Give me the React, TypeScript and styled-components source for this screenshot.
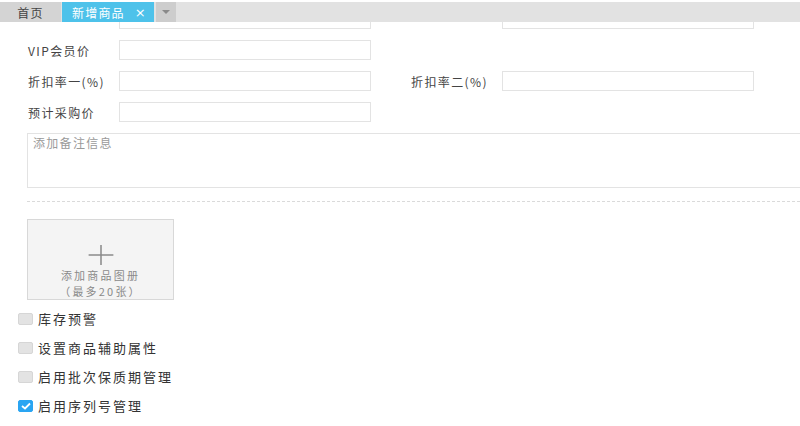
import styled, { createGlobalStyle } from "styled-components";

const GlobalStyle = createGlobalStyle`
  html, body {
    margin: 0;
    padding: 0;
    background: #ffffff;
    font-family: "Noto Sans CJK SC", "Noto Sans", "Liberation Sans", sans-serif;
    color: #333;
  }
`;

const Page = styled.div`
  width: 800px;
  height: 426px;
  overflow: hidden;
  background: #fff;
`;

const TabBar = styled.div`
  margin-top: 2px;
  height: 20px;
  background: #e2e2e2;
  display: flex;
  align-items: stretch;
`;

const Tab = styled.div<{ $active?: boolean; $w: number }>`
  width: ${(p) => p.$w}px;
  margin-right: ${(p) => (p.$active ? 2 : 1)}px;
  background: ${(p) => (p.$active ? "#4ec2ea" : "#d4d4d4")};
  color: ${(p) => (p.$active ? "#fff" : "#444")};
  font-size: 12px;
  letter-spacing: 1.2px;
  display: flex;
  align-items: center;
  justify-content: ${(p) => (p.$active ? "flex-start" : "center")};
  padding-left: ${(p) => (p.$active ? 10 : 0)}px;
  box-sizing: border-box;
  gap: 10px;
`;

const Close = styled.span`
  font-size: 13px;
  font-family: "DejaVu Sans", sans-serif;
  letter-spacing: 0;
`;

const DropBtn = styled.div`
  width: 20px;
  background: #cdcdcd;
  display: flex;
  align-items: center;
  justify-content: center;
  &::after {
    content: "";
    border-left: 4px solid transparent;
    border-right: 4px solid transparent;
    border-top: 4px solid #8a8a8a;
  }
`;

const Body = styled.div`
  height: 404px;
  overflow: hidden;
`;

const Content = styled.div`
  margin-top: -13px;
  padding-left: 27px;
`;

const Rows = styled.div`
  display: flex;
  flex-direction: column;
  gap: 11px;
`;

const Row = styled.div`
  display: flex;
  gap: 39px;
  height: 20px;
`;

const Field = styled.div`
  display: flex;
  align-items: center;
`;

const Label = styled.span`
  width: 92px;
  padding-left: 1px;
  box-sizing: border-box;
  font-size: 12px;
  letter-spacing: 1.4px;
  color: #444;
  white-space: nowrap;
`;

const Input = styled.input`
  width: 252px;
  height: 20px;
  box-sizing: border-box;
  border: 1px solid #e3e3e3;
  outline: none;
  background: #fff;
  padding: 0 4px;
`;

const Remark = styled.textarea`
  display: block;
  margin-top: 11px;
  width: 800px;
  height: 55px;
  box-sizing: border-box;
  border: 1px solid #e3e3e3;
  resize: none;
  outline: none;
  padding: 0 5px;
  font-family: "Noto Sans CJK SC", sans-serif;
  font-size: 12px;
  letter-spacing: 1.3px;
  &::placeholder {
    color: #9a9a9a;
  }
`;

const Divider = styled.div`
  margin-top: 13px;
  height: 0;
  border-top: 1px dashed #dadada;
`;

const Upload = styled.div`
  margin-top: 17px;
  width: 147px;
  height: 81px;
  box-sizing: border-box;
  background: #f4f4f4;
  border: 1px solid #d8d8d8;
  display: flex;
  flex-direction: column;
  align-items: center;
  padding-top: 25px;
  color: #8a8a8a;
  font-size: 11px;
  letter-spacing: 2.2px;
  line-height: 16px;
`;

const Plus = styled.svg`
  width: 26px;
  height: 21px;
  margin-bottom: 2px;
`;

const CheckList = styled.div`
  margin-left: -9px;
  margin-top: 4px;
  display: flex;
  flex-direction: column;
`;

const CheckRow = styled.label`
  height: 29px;
  display: flex;
  align-items: center;
  gap: 5px;
  font-size: 13px;
  letter-spacing: 2px;
  color: #333;
`;

const Box = styled.span<{ $checked?: boolean }>`
  width: 15px;
  height: 12px;
  box-sizing: border-box;
  border-radius: 2px;
  background: ${(p) => (p.$checked ? "#2aa5f2" : "#e3e3e3")};
  border: 1px solid ${(p) => (p.$checked ? "#2aa5f2" : "#d6d6d6")};
  display: flex;
  align-items: center;
  justify-content: center;
`;

const options = [
  { text: "库存预警", checked: false },
  { text: "设置商品辅助属性", checked: false },
  { text: "启用批次保质期管理", checked: false },
  { text: "启用序列号管理", checked: true },
];

export default function App() {
  return (
    <Page>
      <GlobalStyle />
      <TabBar>
        <Tab $w={61}>首页</Tab>
        <Tab $w={92} $active>
          新增商品<Close>×</Close>
        </Tab>
        <DropBtn />
      </TabBar>
      <Body>
        <Content>
          <Rows>
            <Row>
              <Field>
                <Label />
                <Input />
              </Field>
              <Field>
                <Label />
                <Input />
              </Field>
            </Row>
            <Row>
              <Field>
                <Label>VIP会员价</Label>
                <Input />
              </Field>
            </Row>
            <Row>
              <Field>
                <Label>折扣率一(%)</Label>
                <Input />
              </Field>
              <Field>
                <Label>折扣率二(%)</Label>
                <Input />
              </Field>
            </Row>
            <Row>
              <Field>
                <Label>预计采购价</Label>
                <Input />
              </Field>
            </Row>
          </Rows>
          <Remark placeholder="添加备注信息" />
          <Divider />
          <Upload>
            <Plus viewBox="0 0 26 21">
              <path d="M0 10.5H26M13 0V21" stroke="#8a8a8a" strokeWidth="1.6" fill="none" />
            </Plus>
            <span>添加商品图册</span>
            <span>（最多20张）</span>
          </Upload>
          <CheckList>
            {options.map((o) => (
              <CheckRow key={o.text}>
                <Box $checked={o.checked}>
                  {o.checked && (
                    <svg width="10" height="8" viewBox="0 0 10 8">
                      <path d="M1 4L4 6.5L9 1.5" stroke="#fff" strokeWidth="1.8" fill="none" />
                    </svg>
                  )}
                </Box>
                {o.text}
              </CheckRow>
            ))}
          </CheckList>
        </Content>
      </Body>
    </Page>
  );
}
